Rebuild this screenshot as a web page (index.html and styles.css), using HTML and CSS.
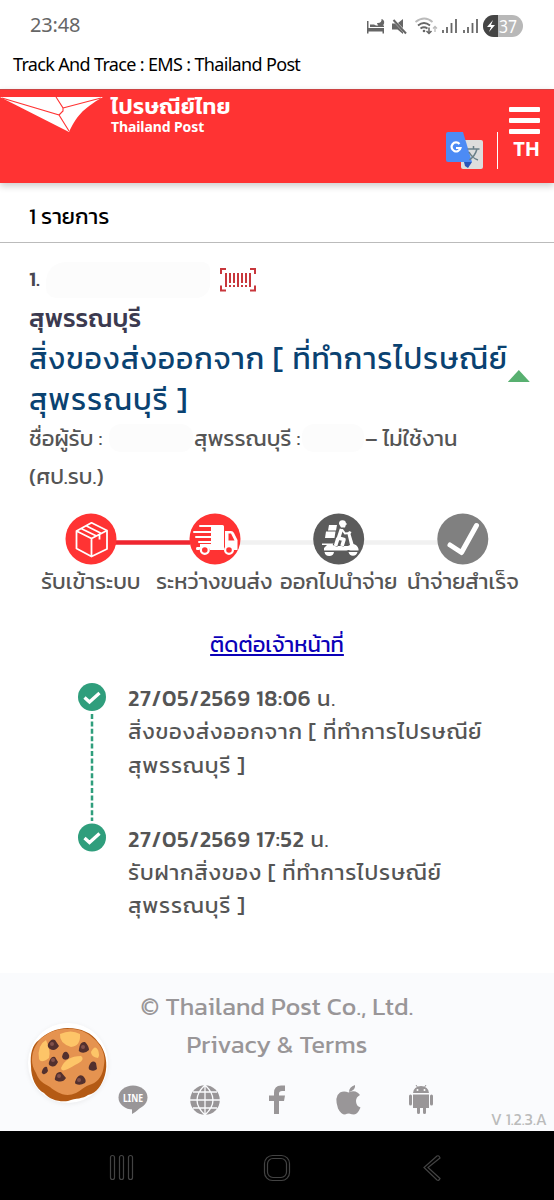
FILE: index.html
```html
<!DOCTYPE html>
<html lang="th">
<head>
<meta charset="utf-8">
<title>Track And Trace : EMS : Thailand Post</title>
<link rel="stylesheet" href="styles.css">
</head>
<body>
<div class="status">
  <span class="clock">23:48</span>
  <svg class="status-icons" width="160" height="30" viewBox="0 0 160 30">
    <g fill="#666">
      <path d="M0 11h1.500v7H17v5.500h-1.500V21.500h-14v2H0zM3 17v-2.500h4l2 1h8V17zM14.500 9a3.600 3.600 0 1 1-4.500 4c3 .5 5-1.500 4.500-4z"/>
      <path d="M25 13.500h3l8 8.500v2l-5.500-4.500H25zM31 13l5-4v9z"/>
    </g>
    <path d="M26.500 10 39 23.500" stroke="#666" stroke-width="2"/>
    <g fill="none" stroke-width="1.800">
      <path d="M48.500 12q9-7 17 0" stroke="#bbb"/>
      <path d="M51 15.500q6-5 12 0M53.500 18.500q3.500-2.500 7 0" stroke="#666"/>
      <path d="M62 17.500v6m-2.500-2.500 2.500 2.500 2.500-2.500" stroke="#666" stroke-width="1.500"/>
      <path d="M68 22v-5.500m-2 2 2-2 2 2" stroke="#bbb" stroke-width="1.300"/>
      <path d="M76 23v-3M80 23v-6M84.500 23v-10M89 23v-14M97 23v-3M101 23v-6M105.500 23v-10M110 23v-14" stroke="#666"/>
    </g>
    <circle cx="57" cy="21" r="1.300" fill="#666"/>
    <rect x="116" y="5" width="40" height="22" rx="11" fill="#b8b8b8"/>
    <path d="M131 5h-4a11 11 0 0 0 0 22h4z" fill="#444"/>
    <path d="M126 10l-6 7h4l-2 5 6-7h-4z" fill="#fff"/>
    <text x="132" y="22.500" class="battery-text" textLength="18" lengthAdjust="spacingAndGlyphs">37</text>
  </svg>
</div>
<div class="page-title"><span>Track And Trace : EMS : Thailand Post</span></div>
<header class="header">
  <svg class="bird" width="103" height="36" viewBox="0 0 103 36">
    <path d="M0 0H103C82 12 76 20 69 35Z" fill="#fff"/>
    <path d="M2 1 59 18 69 34M59 18 63 14V11L56 0M63 11 101 1" fill="none" stroke="#f33" stroke-width="1.100"/>
  </svg>
  <div class="brand"><b class="brand-th">ไปรษณีย์ไทย</b><b class="brand-en">Thailand Post</b></div>
  <svg class="translate" width="38" height="38" viewBox="0 0 38 38">
    <rect x="15" y="8" width="22" height="29" rx="2" fill="#ddd"/>
    <path d="M18 30h8l-4 6-3-2z" fill="#2b55b8"/>
    <path d="M2 0H17L26 30H2a2 2 0 0 1-2-2V2a2 2 0 0 1 2-2z" fill="#4c8bf5"/>
    <path d="M13.500 12a4.500 4.500 0 1 0 1 4h-4.500" fill="none" stroke="#fff" stroke-width="2.200"/>
    <path d="M21.500 17h12M27.500 14v3M31 17q-2 7-7.500 11M23 20q3 6 9 8" fill="none" stroke="#6a7f88" stroke-width="1.500"/>
  </svg>
  <div class="rule"></div>
  <div class="menu"><i></i><i></i><i></i><b>TH</b></div>
</header>
<main>
  <div class="count"><span>1 รายการ</span></div>
  <section class="item">
    <div class="number"><b>1.</b><i class="smudge smudge-a"></i>
      <svg width="36" height="24" viewBox="0 0 36 24" fill="none" stroke="#c8373c" stroke-width="2">
        <path d="M6 1H1v5M30 1h5v5M6 22.500H1v-5M30 22.500h5v-5"/>
        <path d="M6 5v14M10 5v10M14 5v10M18 5v14M22 5v10M26 5v10M30 5v14M10 17v2M14 17v2M22 17v2M26 17v2"/>
      </svg>
    </div>
    <div class="place"><b>สุพรรณบุรี</b></div>
    <div class="headline"><span>สิ่งของส่งออกจาก [ ที่ทำการไปรษณีย์</span><i class="caret"></i></div>
    <div class="headline"><span>สุพรรณบุรี ]</span></div>
    <div class="receiver"><span>ชื่อผู้รับ :</span><i class="smudge"></i><span>สุพรรณบุรี :</span><i class="smudge"></i><span>– ไม่ใช้งาน</span></div>
    <div class="receiver"><span>(ศป.รบ.)</span></div>
  </section>
  <svg class="steps" width="554" height="54" viewBox="0 0 554 54">
    <path d="M115 29.500H190" stroke="#ef2630" stroke-width="4.500"/>
    <path d="M240 29.500H440" stroke="#f1f1f1" stroke-width="4.500"/>
    <circle cx="91" cy="26" r="25.500" fill="#f33"/>
    <circle cx="215" cy="26" r="25.500" fill="#f33"/>
    <circle cx="338.700" cy="26" r="25.500" fill="#5b5b5b"/>
    <circle cx="462.800" cy="26" r="25.500" fill="#808080"/>
    <path d="M76.500 18 91.500 9.800 107 17.500v18.500L91.500 43.500 76.500 35.500zM76.500 18 91.500 25.500 107 17.500M91.500 25.500V43M81 15.500l15.500 7.500M86 12.800 101.500 20.500M99.500 21.500v5" fill="none" stroke="#fff" stroke-width="1.800" stroke-linejoin="round"/>
    <path d="M211 12h11.500q1.500 0 1.500 1.500V37h-14a5.500 5.500 0 0 0-10.500 0H197q-1 0-1-1.500t1-1.500h3v-3h11z" fill="#fff"/>
    <path d="M200 13h12M194 19h18M196 24h16M199 29h13" stroke="#fff" stroke-width="2" stroke-linecap="round"/>
    <path d="M225 18h6q2 0 3 2l3.500 7v10h-3.500a5.500 5.500 0 0 0-9 0z" fill="#fff"/>
    <path d="M228.500 20.500h2.500l3.500 7h-6z" fill="#f33"/>
    <circle cx="204.800" cy="37" r="3.900" fill="#f33" stroke="#fff" stroke-width="2.200"/>
    <circle cx="229" cy="37" r="3.900" fill="#f33" stroke="#fff" stroke-width="2.200"/>
    <g fill="#fff">
      <path d="M339 11a3.500 3.500 0 0 1 7-.5h1v1h-1l-1 3h-4z"/>
      <path d="M329 12h8l-1 5.500h-8zM326 18.500h9.500l-1 6.500H325z"/>
      <path d="M349 18l2.500 1-1 2 3 10q4 1 5 5v1.500h-8a4.500 4.500 0 0 0-4 0H324v-2.500l3-3h-5v-1.500h16v2.500h10l2-1-2.500-11z"/>
      <path d="M324.500 39h9.500a4.800 4.800 0 0 1-9.500 0zM348.500 39h9a4.600 4.600 0 0 1-9 0z"/>
    </g>
    <path d="M341.500 16 339.500 25 343.500 26 341.500 33M337.500 27 335 33" fill="none" stroke="#5b5b5b" stroke-width="5"/>
    <path d="M341.500 16 338.500 25 344 26.500 342 33M338 25 335.500 33" fill="none" stroke="#fff" stroke-width="3.600" stroke-linejoin="round"/>
    <path d="M342 16.500 345 20.500 350 20" fill="none" stroke="#fff" stroke-width="2"/>
    <path d="M450 32 461.500 39.500 476.500 12.500" fill="none" stroke="#fff" stroke-width="5" stroke-linecap="round" stroke-linejoin="round"/>
  </svg>
  <div class="step-labels"><span>รับเข้าระบบ</span><span>ระหว่างขนส่ง</span><span>ออกไปนำจ่าย</span><span>นำจ่ายสำเร็จ</span></div>
  <div class="contact"><a href="#">ติดต่อเจ้าหน้าที่</a></div>
  <div class="timeline">
    <svg width="28" height="170" viewBox="0 0 28 170">
      <path d="M14 31V138" stroke="#2f9e7c" stroke-width="2.500" stroke-dasharray="5 2.400"/>
      <g fill="#2f9e7c"><circle cx="14" cy="14" r="14"/><circle cx="14" cy="154.500" r="14"/></g>
      <path d="M6.500 14.500l5 4.500 10-9M6.500 155l5 4.500 10-9" fill="none" stroke="#fff" stroke-width="3.300"/>
    </svg>
    <div class="events">
      <div class="event"><div class="stamp"><b>27/05/2569 18:06</b><span> น.</span></div><div><span>สิ่งของส่งออกจาก [ ที่ทำการไปรษณีย์</span></div><div><span>สุพรรณบุรี ]</span></div></div>
      <div class="event"><div class="stamp"><b>27/05/2569 17:52</b><span> น.</span></div><div><span>รับฝากสิ่งของ [ ที่ทำการไปรษณีย์</span></div><div><span>สุพรรณบุรี ]</span></div></div>
    </div>
  </div>
</main>
<footer class="footer">
  <div class="legal"><span>© Thailand Post Co., Ltd.</span></div>
  <div class="legal"><span>Privacy &amp; Terms</span></div>
  <svg class="social" width="320" height="30" viewBox="0 0 320 30" fill="#999698">
    <ellipse cx="15" cy="12.500" rx="14.500" ry="12"/><path d="M24 20Q20 26 14 29V23z"/>
    <text x="5" y="16.500" class="line-text" textLength="20" lengthAdjust="spacingAndGlyphs">LINE</text>
    <circle cx="87" cy="15" r="14.800"/>
    <path d="M87 0v30M72 15h30M75 7h24M75 23h24M87 0q-16 15 0 30q16-15 0-30" fill="none" stroke="#fafbfd" stroke-width="1.300"/>
    <path d="M156 29V16h-5v-5.500h5V8q0-7.500 7-7.500h4V6h-3q-3 0-3 2.500v2h6l-1 5.500h-5v13z"/>
    <path d="M237 0q1 5-6 7 0-5 6-7zM242 10q-4 2-4 6 0 5 4.500 6.500-3 7-6.500 7-2 0-5-1-2 0-4 1-4 0-7-6-4-12 2-16 4-2 8.500 0 4-2 7-1 3 1 4.500 3.500z"/>
    <path d="M295 8a8 7 0 0 1 16 0zM295 9.500h16V23h-3v4.500a1.500 1.500 0 0 1-3 0V23h-3v4.500a1.500 1.500 0 0 1-3 0V23h-4z"/>
    <rect x="291" y="9.500" width="3" height="11" rx="1.500"/><rect x="312" y="9.500" width="3" height="11" rx="1.500"/>
    <path d="M298 0l2 3M308 0l-2 3" stroke="#999698"/><circle cx="299.500" cy="5" r="1" fill="#fff"/><circle cx="306.500" cy="5" r="1" fill="#fff"/>
  </svg>
  <svg class="cookie" width="82" height="84" viewBox="0 0 82 84">
    <circle cx="41" cy="41" r="40" fill="#fff"/>
    <path d="M4 44C3 32 5 23 12 18 19 11 29 6 41 6 54 6 65 11 71 20 79 28 81 43 78 53 75 63 70 71 61 73 56 77 49 76 41 79 32 80 23 78 17 71 9 67 4 56 4 44z" fill="#b45a14"/>
    <path d="M5 38C5 28 10 18 19 13 26 8 33 7 40 7 50 6 60 10 66 16 75 23 79 34 77 43 76 53 71 60 65 62 57 64 54 69 49 71 38 76 29 70 23 65 16 61 12 59 9 51 6 46 5 42 5 38z" fill="#e59350"/>
    <g fill="#fdc568"><path d="M33 12q11-5 20 0 1 12-9 13-12-4-11-13zM12 37q-2-14 7-19 5 11 3 18-8 6-10 1zM34 46q5-12 20-12 5 4-6 9-14 9-14 3zM64 30q4-8 7-2 2 5 0 8-7-1-7-6z"/></g>
    <g fill="#53302e"><path d="M21 22q3-6 7-4l4 6q-4 6-9 3-3-2-2-5zM52 27q1-8 6-7 4 4 4 8-4 4-9 2-2-1-1-3zM35 35q1-6 5-5 4 4 1 7-5 2-6-2zM22 40q2-6 6-5l3 5q-3 6-7 4-3-1-2-4zM15 49q2-5 5-4l1 4q-2 4-5 3-2-1-1-3zM62 44q3-7 7-3l1 6q-3 3-7 1-2-1-1-4zM28 56q1-7 6-6l5 6q-3 5-9 3-3-1-2-3zM48 60q3-9 8-6 4 4 2 7-5 3-9 1-1 0-1-2z"/></g>
    <g fill="#82514b"><circle cx="25" cy="22" r="2"/><circle cx="56" cy="25" r="2"/><circle cx="26" cy="38" r="2"/><circle cx="32" cy="54" r="2"/><circle cx="52" cy="58" r="2"/></g>
  </svg>
  <span class="version">V 1.2.3.A</span>
</footer>
<nav class="nav">
  <svg width="554" height="69" viewBox="0 0 554 69" fill="none" stroke="#434343" stroke-width="1.200">
    <rect x="110.500" y="24.500" width="4" height="24" rx="2"/><rect x="119.500" y="24.500" width="4" height="24" rx="2"/><rect x="128.500" y="24.500" width="4" height="24" rx="2"/>
    <rect x="264.500" y="24.500" width="25" height="25" rx="8"/><rect x="267.500" y="27.500" width="19" height="19" rx="5.500"/>
    <path d="M437 25 424 36.500 437 49q2 1 3-1.500L428 36.500 440 27q-1-3-3-2z"/>
  </svg>
</nav>
</body>
</html>
```
FILE: styles.css
```css
* { box-sizing: border-box; }
body { margin: 0; width: 554px; height: 1200px; overflow: hidden; background: #fff; color: #555; font-family: "Kanit", "Noto Sans Thai", "Noto Sans", sans-serif; white-space: nowrap; display: flex; flex-direction: column; }
svg { display: block; flex: none; }
b { font-weight: 600; }
span, a, b { display: inline-block; }
.status { height: 50px; flex: none; padding: 0 0 0 30px; display: flex; align-items: center; color: #666; }
.clock { width: 337px; font: 20px/50px "Noto Sans", sans-serif; letter-spacing: -.2px; }
.battery-text { font: 18px "Noto Sans", sans-serif; fill: #fff; }
.page-title { height: 39px; flex: none; padding-left: 13px; color: #000; font: 18px/29px "Noto Sans", sans-serif; letter-spacing: -.66px; }
.header { height: 94px; background: #f33; color: #fff; display: flex; box-shadow: 0 3px 7px #0003; flex: none; border-top: 1px solid #c44; }
.bird { margin-top: 7px; }
.brand { width: 335px; padding: 3px 0 0 8px; display: flex; flex-direction: column; }
.brand-th { font-size: 22px; line-height: 27px; letter-spacing: .5px; }
.brand-en { font: bold 14px/14px "Noto Sans", sans-serif; letter-spacing: -.1px; }
.translate { margin: 42px 0 0 8px; }
.rule { width: 1px; height: 37px; margin: 42px 11px 0 13px; background: #fff; }
.menu { width: 31px; padding-top: 17px; display: flex; flex-direction: column; gap: 6px; }
.menu i { height: 5px; background: #fff; border-radius: 1px; }
.menu b { margin-top: -3px; font: bold 20px/24px "Noto Sans", sans-serif; text-align: right; }
main { height: 790px; flex: none; }
.count { height: 60px; padding-left: 29px; border-bottom: 1px solid #bbb; color: #000; font-size: 22px; line-height: 68px; }
.item { height: 270px; padding: 17px 0 0 29px; }
.number { height: 39px; display: flex; align-items: center; font-size: 21px; color: #484850; }
.number b { width: 17px; margin-top: -3px; font-weight: 500; }
.smudge { margin-top: 4px; background: #fcfcfc; border-radius: 12px; height: 28px; }
.smudge-a { width: 164px; margin: 0 10px 0 0; height: 36px; border-radius: 20px 8px 14px 10px; }
.place { height: 39px; font-size: 25px; line-height: 39px; color: #3c3a50; }
.place b { font-weight: 500; letter-spacing: .1px; }
.headline { height: 41px; display: flex; font-size: 30px; line-height: 41px; letter-spacing: .97px; color: #0a4271; }
.caret { width: 22px; height: 12px; margin: 32px 0 -3px; background: #58b070; clip-path: polygon(50% 0, 100% 100%, 0 100%); }
.receiver { height: 38px; display: grid; grid-template-columns: 79px 84px 107px 62px auto; column-gap: 1px; font-size: 22px; line-height: 38px; }
.step-labels { height: 34px; display: grid; grid-template-columns: 115px 124px 127px auto; padding-left: 41px; font-size: 22px; line-height: 30px; }
.contact { height: 53px; padding-top: 26px; text-align: center; font-size: 22px; line-height: 36px; }
.contact a { color: #0b00b8; }
.timeline { display: flex; gap: 22px; margin-top: 29px; padding-left: 78px; }
.events { margin-top: -1px; font-size: 22px; line-height: 33.300px; letter-spacing: .83px; }
.events b { font-weight: 500; letter-spacing: .68px; }
.event { height: 140.500px; }
.stamp { display: flex; white-space: pre; }
.footer { height: 158px; background: #fafbfd; position: relative; flex: none; color: #999698; text-align: center; padding-top: 14px; }
.legal { height: 38px; font-size: 25px; line-height: 38px; letter-spacing: .14px; }
.social { margin: 22px 0 0 118px; }
.line-text { font: bold 11px "Noto Sans", sans-serif; fill: #fff; }
.cookie { position: absolute; left: 27px; top: 49px; filter: drop-shadow(0 1px 2px #0001); }
.version { position: absolute; right: 7px; bottom: 1px; color: #bbb; font-size: 16px; line-height: 22px; }
.nav { height: 69px; background: #000; flex: none; }
```
